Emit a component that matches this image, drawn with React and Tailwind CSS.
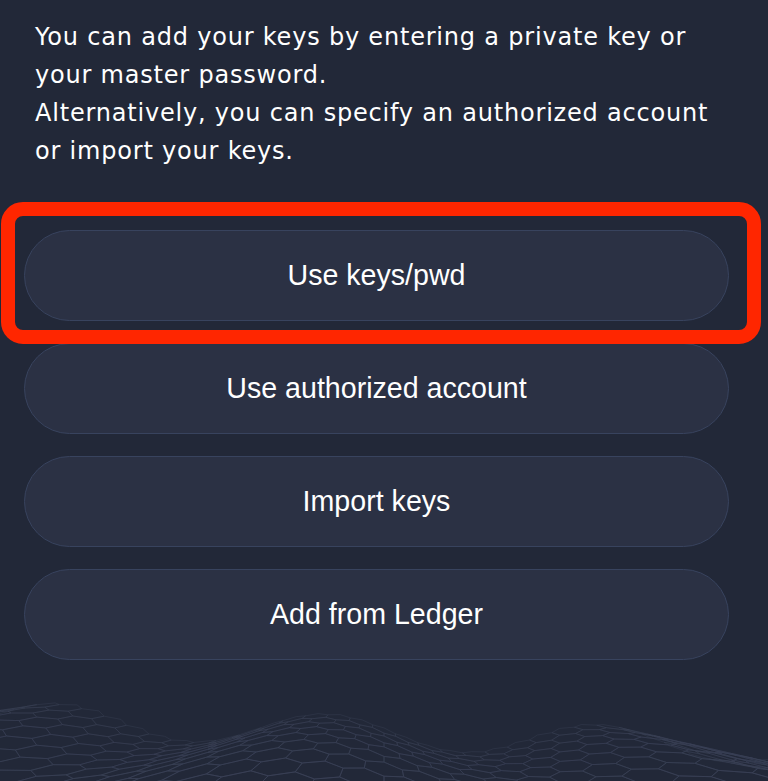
import React from 'react';

const options = ['Use keys/pwd', 'Use authorized account', 'Import keys', 'Add from Ledger'];

// Perspective hex mesh along the bottom edge, generated once.
function buildMesh() {
  const W = 768, horizon = 680, f = 300, H = 1.5;
  const r = 0.34;
  const zFar = 8.2, zNear = 1.6;
  const wave = (x, z) => {
    const k = Math.min(1, z / zFar);
    return k * (0.45 * Math.cos(((x + 1.5) * 2 * Math.PI) / 7.2) + 0.1 - 0.04 * x);
  };
  const proj = (x, z) => [W / 2 + (f * x) / z, horizon + (f * (H - wave(x, z))) / z];
  const paths = [];
  const dx = r * Math.sqrt(3);
  const dz = r * 1.5;
  for (let row = 0; ; row++) {
    const zc = zNear + row * dz;
    if (zc > zFar) break;
    const off = row % 2 ? dx / 2 : 0;
    for (let col = -60; col <= 60; col++) {
      const xc = col * dx + off;
      const pts = [];
      for (let i = 0; i < 6; i++) {
        const a = Math.PI / 6 + (i * Math.PI) / 3;
        pts.push(proj(xc + r * Math.cos(a), zc + r * Math.sin(a)));
      }
      if (pts.every(p => p[0] < -40 || p[0] > W + 40)) continue;
      const t = (zc - zNear) / (zFar - zNear);
      paths.push({
        d: 'M' + pts.map(p => p[0].toFixed(1) + ' ' + p[1].toFixed(1)).join('L') + 'Z',
        o: (1 - t * 0.65).toFixed(2),
      });
    }
  }
  return paths;
}

const mesh = buildMesh();

export default function App() {
  return (
    <div className="relative w-full h-[781px] overflow-hidden bg-[#222838]">
      <svg className="absolute left-0 bottom-0" width="768" height="110" viewBox="0 671 768 110">
        {mesh.map((p, i) => (
          <path key={i} d={p.d} fill="none" stroke="#394055" strokeWidth="1" strokeOpacity={p.o} />
        ))}
      </svg>

      <div className="relative">
        <p className="pl-[35px] pr-2 pt-[18px] text-[24px] leading-[38px] tracking-[0.8px] text-white" style={{ fontFamily: '"DejaVu Sans", sans-serif' }}>
          You can add your keys by entering a private key or<br />
          your master password.<br />
          Alternatively, you can specify an authorized account<br />
          or import your keys.
        </p>

        <div className="absolute left-0 top-[230px] w-full pl-6 pr-[39px] flex flex-col gap-[22px]">
          {options.map(label => (
            <button
              key={label}
              className="h-[91px] w-full rounded-full bg-[#2b3144] border border-[#38435e] text-white text-[28.6px] flex items-center justify-center"
              style={{ fontFamily: '"Liberation Sans", Arial, sans-serif' }}
            >
              {label}
            </button>
          ))}
        </div>
      </div>

      {/* highlight annotation round the first option */}
      <div className="absolute left-[1px] top-[202px] w-[760px] h-[142px] border-[14px] border-[#ff2600] rounded-[22px] pointer-events-none" />
    </div>
  );
}
